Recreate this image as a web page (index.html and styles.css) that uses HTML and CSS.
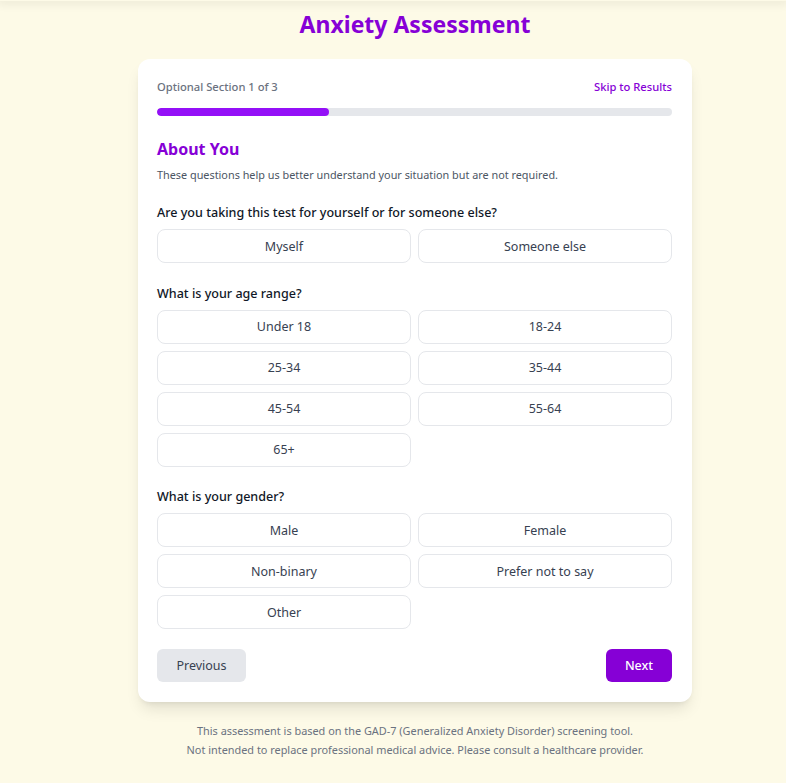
FILE: index.html
```html
<!DOCTYPE html>
<html lang="en">
<head>
<meta charset="utf-8">
<title>Anxiety Assessment</title>
<link rel="stylesheet" href="styles.css">
</head>
<body>
<div class="topshade"></div>
<main class="page">
  <h1 class="title">Anxiety Assessment</h1>
  <section class="card">
    <div class="meta">
      <span class="step">Optional Section 1 of 3</span>
      <a class="skip" href="#">Skip to Results</a>
    </div>
    <div class="track"><div class="fill" style="width:33.4%"></div></div>

    <h2 class="section-title">About You</h2>
    <p class="section-desc">These questions help us better understand your situation but are not required.</p>

    <div class="question">
      <h3 class="q-label">Are you taking this test for yourself or for someone else?</h3>
      <div class="options">
        <button class="opt">Myself</button>
        <button class="opt">Someone else</button>
      </div>
    </div>

    <div class="question">
      <h3 class="q-label">What is your age range?</h3>
      <div class="options">
        <button class="opt">Under 18</button>
        <button class="opt">18-24</button>
        <button class="opt">25-34</button>
        <button class="opt">35-44</button>
        <button class="opt">45-54</button>
        <button class="opt">55-64</button>
        <button class="opt">65+</button>
      </div>
    </div>

    <div class="question">
      <h3 class="q-label">What is your gender?</h3>
      <div class="options">
        <button class="opt">Male</button>
        <button class="opt">Female</button>
        <button class="opt">Non-binary</button>
        <button class="opt">Prefer not to say</button>
        <button class="opt">Other</button>
      </div>
    </div>

    <div class="nav">
      <button class="btn-prev">Previous</button>
      <button class="btn-next">Next</button>
    </div>
  </section>
  <footer class="foot">
    <p>This assessment is based on the GAD-7 (Generalized Anxiety Disorder) screening tool.</p>
    <p>Not intended to replace professional medical advice. Please consult a healthcare provider.</p>
  </footer>
</main>
</body>
</html>
```

FILE: styles.css
```css
* { box-sizing: border-box; }
html, body { margin: 0; padding: 0; }
body {
  background: #fdfae7;
  font-family: "Noto Sans", "Open Sans", sans-serif;
  color: #111827;
  min-height: 783px;
  padding-left: 44px;
}
.topshade {
  position: absolute;
  top: 0; left: 0; right: 0;
  height: 1px;
  box-shadow: 0 0 10px 3px rgba(0,0,0,0.08);
}
.page {
  width: 554px;
  margin: 0 auto;
  padding-top: 8px;
  display: flex;
  flex-direction: column;
  align-items: stretch;
}
.title {
  margin: 0 0 18px;
  text-align: center;
  font-size: 23px;
  line-height: 33px;
  font-weight: 700;
  color: #8600d6;
}
.card {
  background: #fff;
  border-radius: 12px;
  padding: 19px 20px 20px 19px;
  box-shadow: 0 10px 15px -3px rgba(0,0,0,0.1), 0 4px 6px -4px rgba(0,0,0,0.1);
}
.meta {
  display: flex;
  justify-content: space-between;
  align-items: center;
  font-size: 11.2px;
  line-height: 18px;
}
.step { color: #6b7280; font-weight: 500; }
.skip { color: #8600d6; text-decoration: none; font-weight: 500; }
.track {
  margin-top: 12px;
  height: 8px;
  background: #e5e7eb;
  border-radius: 999px;
  overflow: hidden;
}
.fill { height: 100%; background: #9410f7; border-radius: 999px; }
.section-title {
  margin: 21px 0 0;
  font-size: 16px;
  line-height: 24px;
  font-weight: 700;
  color: #8600d6;
}
.section-desc {
  margin: 6px 0 0;
  font-size: 10.85px;
  line-height: 16px;
  color: #4b5563;
}
.question { margin-top: 21px; }
.question + .question { margin-top: 21.5px; }
.q-label {
  margin: 0 0 7px;
  font-size: 12.55px;
  line-height: 18px;
  font-weight: 500;
  color: #111827;
}
.options {
  display: grid;
  grid-template-columns: 1fr 1fr;
  gap: 7px 7px;
}
.opt {
  height: 34px;
  background: #fff;
  border: 1px solid #e5e7eb;
  border-radius: 8px;
  font-family: inherit;
  font-size: 12.5px;
  color: #374151;
  padding: 0;
}
.nav {
  margin-top: 20px;
  display: flex;
  justify-content: space-between;
}
.btn-prev, .btn-next {
  height: 33px;
  border: none;
  border-radius: 6px;
  font-family: inherit;
  font-size: 12.5px;
  padding: 0;
}
.btn-prev { background: #e5e7eb; color: #374151; width: 89px; }
.btn-next { background: #8600d6; color: #fff; width: 66px; font-weight: 500; }
.foot {
  margin-top: 19px;
  text-align: center;
  font-size: 10.9px;
  line-height: 19px;
  color: #6b7280;
}
.foot p { margin: 0; }
```
